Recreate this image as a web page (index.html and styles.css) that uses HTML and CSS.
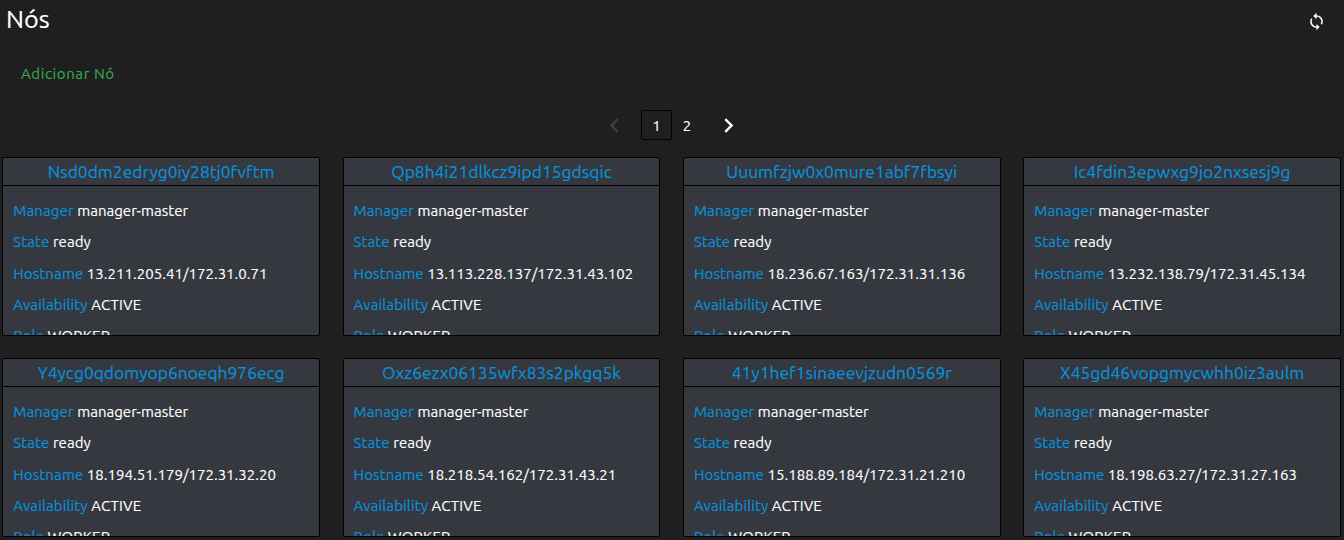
FILE: index.html
```html
<!DOCTYPE html>
<html lang="pt">
<head>
<meta charset="utf-8">
<title>Nós</title>
<link rel="stylesheet" href="styles.css">
</head>
<body>
<header class="topbar">
  <h1 class="page-title">Nós</h1>
  <button class="icon-button" aria-label="Sync"><svg width="19" height="19" viewBox="0 0 24 24"><path d="M12 4V1L8 5l4 4V6c3.310 0 6 2.690 6 6 0 1.010-.25 1.970-.7 2.800l1.460 1.460C19.540 15.030 20 13.570 20 12c0-4.420-3.580-8-8-8zm0 14c-3.310 0-6-2.690-6-6 0-1.010.25-1.970.7-2.800L5.240 7.740C4.460 8.970 4 10.430 4 12c0 4.420 3.580 8 8 8v3l4-4-4-4v3z"/></svg></button>
</header>
<div class="actions"><button class="add-button">Adicionar Nó</button></div>
<nav class="pagination">
  <button class="arrow arrow-disabled" aria-label="Previous"><svg width="29" height="29" viewBox="0 0 24 24"><path d="M15.410 7.410L14 6l-6 6 6 6 1.410-1.410L10.830 12z"/></svg></button>
  <button class="page page-active">1</button>
  <button class="page">2</button>
  <button class="arrow arrow-next" aria-label="Next"><svg width="29" height="29" viewBox="0 0 24 24"><path d="M10 6L8.590 7.410 13.170 12l-4.580 4.590L10 18l6-6z"/></svg></button>
</nav>
<main class="cards">
  <article class="card"><h2 class="card-title">Nsd0dm2edryg0iy28tj0fvftm</h2><div class="card-body"><p class="row"><span class="key">Manager</span> manager-master</p><p class="row"><span class="key">State</span> ready</p><p class="row"><span class="key">Hostname</span> 13.211.205.41/172.31.0.71</p><p class="row"><span class="key">Availability</span> <span class="status">ACTIVE</span></p><p class="row"><span class="key">Role</span> <span class="status">WORKER</span></p></div></article>
  <article class="card"><h2 class="card-title">Qp8h4i21dlkcz9ipd15gdsqic</h2><div class="card-body"><p class="row"><span class="key">Manager</span> manager-master</p><p class="row"><span class="key">State</span> ready</p><p class="row"><span class="key">Hostname</span> 13.113.228.137/172.31.43.102</p><p class="row"><span class="key">Availability</span> <span class="status">ACTIVE</span></p><p class="row"><span class="key">Role</span> <span class="status">WORKER</span></p></div></article>
  <article class="card"><h2 class="card-title">Uuumfzjw0x0mure1abf7fbsyi</h2><div class="card-body"><p class="row"><span class="key">Manager</span> manager-master</p><p class="row"><span class="key">State</span> ready</p><p class="row"><span class="key">Hostname</span> 18.236.67.163/172.31.31.136</p><p class="row"><span class="key">Availability</span> <span class="status">ACTIVE</span></p><p class="row"><span class="key">Role</span> <span class="status">WORKER</span></p></div></article>
  <article class="card"><h2 class="card-title">Ic4fdin3epwxg9jo2nxsesj9g</h2><div class="card-body"><p class="row"><span class="key">Manager</span> manager-master</p><p class="row"><span class="key">State</span> ready</p><p class="row"><span class="key">Hostname</span> 13.232.138.79/172.31.45.134</p><p class="row"><span class="key">Availability</span> <span class="status">ACTIVE</span></p><p class="row"><span class="key">Role</span> <span class="status">WORKER</span></p></div></article>
  <article class="card"><h2 class="card-title">Y4ycg0qdomyop6noeqh976ecg</h2><div class="card-body"><p class="row"><span class="key">Manager</span> manager-master</p><p class="row"><span class="key">State</span> ready</p><p class="row"><span class="key">Hostname</span> 18.194.51.179/172.31.32.20</p><p class="row"><span class="key">Availability</span> <span class="status">ACTIVE</span></p><p class="row"><span class="key">Role</span> <span class="status">WORKER</span></p></div></article>
  <article class="card"><h2 class="card-title">Oxz6ezx06135wfx83s2pkgq5k</h2><div class="card-body"><p class="row"><span class="key">Manager</span> manager-master</p><p class="row"><span class="key">State</span> ready</p><p class="row"><span class="key">Hostname</span> 18.218.54.162/172.31.43.21</p><p class="row"><span class="key">Availability</span> <span class="status">ACTIVE</span></p><p class="row"><span class="key">Role</span> <span class="status">WORKER</span></p></div></article>
  <article class="card"><h2 class="card-title">41y1hef1sinaeevjzudn0569r</h2><div class="card-body"><p class="row"><span class="key">Manager</span> manager-master</p><p class="row"><span class="key">State</span> ready</p><p class="row"><span class="key">Hostname</span> 15.188.89.184/172.31.21.210</p><p class="row"><span class="key">Availability</span> <span class="status">ACTIVE</span></p><p class="row"><span class="key">Role</span> <span class="status">WORKER</span></p></div></article>
  <article class="card"><h2 class="card-title">X45gd46vopgmycwhh0iz3aulm</h2><div class="card-body"><p class="row"><span class="key">Manager</span> manager-master</p><p class="row"><span class="key">State</span> ready</p><p class="row"><span class="key">Hostname</span> 18.198.63.27/172.31.27.163</p><p class="row"><span class="key">Availability</span> <span class="status">ACTIVE</span></p><p class="row"><span class="key">Role</span> <span class="status">WORKER</span></p></div></article>
</main>
</body>
</html>
```
FILE: styles.css
```css
* { box-sizing: border-box; }
body {
  margin: 0;
  height: 540px;
  overflow: hidden;
  background: #1f1f1f;
  color: #fff;
  font: 15px/20px Ubuntu, "Noto Sans", sans-serif;
  -webkit-text-stroke: 0.15px currentColor;
}
button { margin: 0; padding: 0; border: 0; background: none; color: inherit; font: inherit; }
svg { display: block; fill: currentColor; }
.topbar { display: flex; justify-content: space-between; height: 42px; padding: 0 18px 0 6px; align-items: center; }
.page-title { margin: 0 0 4px; font-size: 25.200px; font-weight: 400; line-height: 32px; }
.actions { height: 64px; padding: 21px 21px 0; }
.add-button { display: block; color: #34a84f; line-height: 22px; letter-spacing: 0.6px; }
.pagination { display: flex; align-items: center; height: 51px; padding: 3px 0 16px 600px; }
.arrow-disabled { color: #3e3e3e; margin-right: 12px; }
.arrow-next { margin-left: 11px; }
.page { width: 31px; height: 30px; padding: 1px 1px 0 0; border: 1px solid transparent; border-radius: 2px; }
.page-active { padding-right: 0; border-color: #000; }
.cards { display: grid; grid-template-columns: repeat(4, 1fr); gap: 22px 22.600px; padding: 0 3px 0 2.250px; }
.card { display: flex; flex-direction: column; height: 179px; border: 1px solid #000; border-radius: 2px; background: #363840; overflow: hidden; }
.card-title { flex: none; height: 28px; margin: 0; border-bottom: 1px solid #000; color: #0593de; font-size: 17.400px; font-weight: 400; line-height: 28px; text-align: center; }
.card-body { padding: 14.900px 10px 0; overflow: hidden; }
.row { margin: 0 0 11.400px; line-height: 20px; white-space: nowrap; letter-spacing: 0.030px; }
.key { color: #0593de; letter-spacing: 0.120px; }
.status { letter-spacing: 0.150px; }
```
